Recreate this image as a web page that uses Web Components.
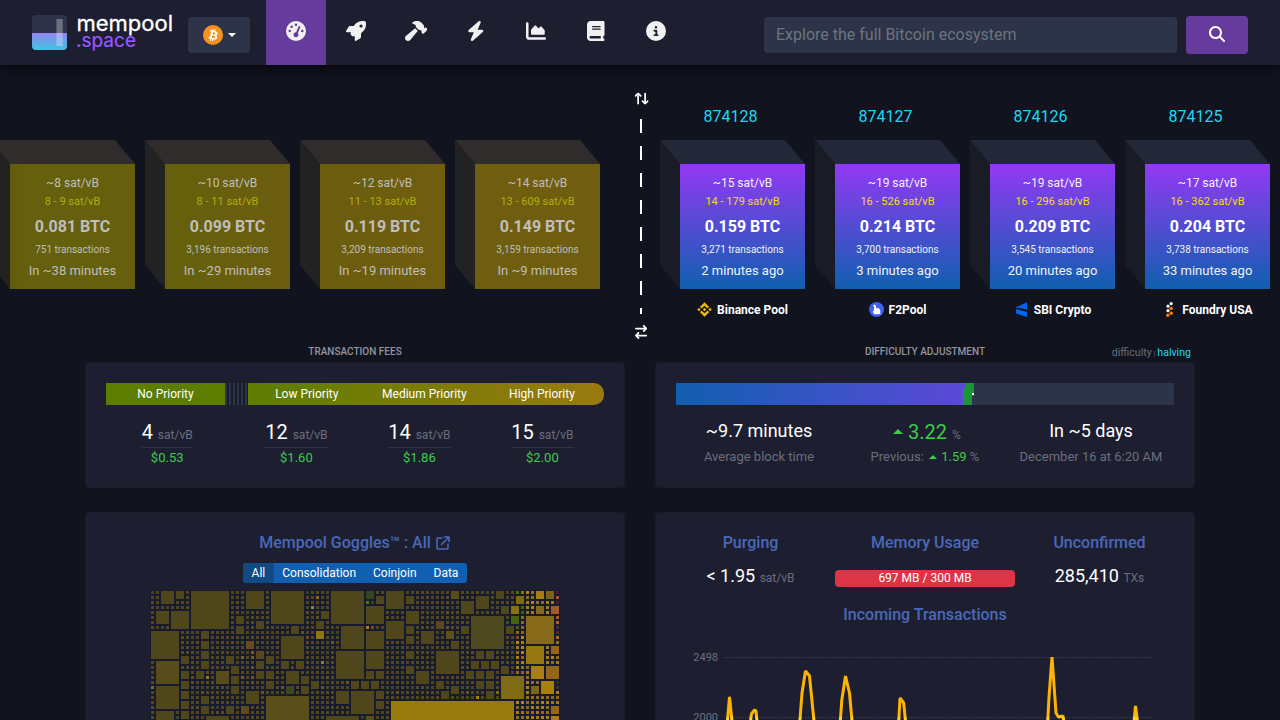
<!DOCTYPE html>
<html lang="en">
<head>
<meta charset="utf-8">
<title>mempool</title>
<style>
html,body{margin:0;height:100%;overflow:hidden;background:#11131f;color:#fff;font-family:Roboto,"Liberation Sans",sans-serif;font-size:16px}
</style>
</head>
<body>
<mempool-app></mempool-app>
<script>
const ICONS = {
  gauge:['0 0 512 512','M0 256a256 256 0 1 1 512 0A256 256 0 1 1 0 256zM288 96a32 32 0 1 0 -64 0 32 32 0 1 0 64 0zM256 416c35.3 0 64-28.7 64-64c0-17.4-6.9-33.1-18.1-44.6L366 161.7c5.3-12.1-.2-26.3-12.3-31.6s-26.3 .2-31.6 12.3L257.9 288c-.6 0-1.3 0-1.9 0c-35.3 0-64 28.7-64 64s28.7 64 64 64zM176 144a32 32 0 1 0 -64 0 32 32 0 1 0 64 0zM96 288a32 32 0 1 0 0-64 32 32 0 1 0 0 64zm352-32a32 32 0 1 0 -64 0 32 32 0 1 0 64 0z'],
  rocket:['0 0 512 512','M156.6 384.9L125.7 354c-8.5-8.5-11.5-20.8-7.7-32.2c3-8.9 7-20.5 11.8-33.8L24 288c-8.6 0-16.6-4.6-20.9-12.1s-4.2-16.7 .2-24.1l52.5-88.5c13-21.9 36.5-35.3 61.9-35.3l82.3 0c2.4-4 4.8-7.7 7.2-11.3C289.1-4.1 411.1-8.1 483.9 5.3c11.6 2.1 20.6 11.2 22.8 22.8c13.4 72.9 9.3 194.8-111.4 276.7c-3.5 2.4-7.3 4.8-11.3 7.2v82.3c0 25.4-13.4 49-35.3 61.9l-88.5 52.5c-7.4 4.4-16.6 4.5-24.1 .2s-12.1-12.2-12.1-20.9V380.8c-14.1 4.9-26.4 8.9-35.7 11.9c-11.2 3.6-23.4 .5-31.8-7.8zM384 168a40 40 0 1 0 0-80 40 40 0 1 0 0 80z'],
  hammer:['0 0 576 512','M413.5 237.5c-28.2 4.8-58.2-3.6-80-25.4l-38.1-38.1C280.4 159 272 138.8 272 117.6V105.5L192.3 62c-5.3-2.9-8.6-8.6-8.3-14.7s3.9-11.5 9.5-14l47.2-21C259.1 4.2 279 0 299.2 0h18.1c36.7 0 72 14 98.7 39.1l44.6 42c24.2 22.8 33.2 55.7 26.6 86L503 183l8-8c9.4-9.4 24.6-9.4 33.9 0l24 24c9.4 9.4 9.4 24.6 0 33.9l-88 88c-9.4 9.4-24.6 9.4-33.9 0l-24-24c-9.4-9.4-9.4-24.6 0-33.9l8-8-17.5-17.5zM27.4 377.1L260.9 182.6c3.5 4.9 7.5 9.6 11.8 14l38.1 38.1c6 6 12.4 11.2 19.2 15.7L134.9 484.6c-14.5 17.4-36 27.4-58.6 27.4C34.1 512 0 477.8 0 435.7c0-22.6 10.1-44.1 27.4-58.6z'],
  bolt:['0 0 448 512','M349.4 44.6c5.9-13.7 1.5-29.7-10.6-38.5s-28.6-8-39.9 1.8l-256 224c-10 8.8-13.6 22.9-8.9 35.3S50.7 288 64 288H175.5L98.6 467.4c-5.9 13.7-1.5 29.7 10.6 38.5s28.6 8 39.9-1.8l256-224c10-8.8 13.6-22.9 8.9-35.3s-16.6-20.7-30-20.7H272.5L349.4 44.6z'],
  chart:['0 0 512 512','M64 64c0-17.7-14.3-32-32-32S0 46.3 0 64V400c0 44.2 35.8 80 80 80H480c17.7 0 32-14.3 32-32s-14.3-32-32-32H80c-8.8 0-16-7.2-16-16V64zm96 288H448c17.7 0 32-14.3 32-32V251.8c0-7.6-2.7-15-7.7-20.8l-65.8-76.8c-12.1-14.2-33.7-15-46.9-1.8l-21 21c-10 10-26.4 9.2-35.4-1.6l-39.2-47c-12.6-15.1-35.7-15.4-48.7-.6L135.9 215c-5.1 5.8-7.9 13.3-7.9 21.1v84c0 17.7 14.3 32 32 32z'],
  book:['0 0 448 512','M96 0C43 0 0 43 0 96V416c0 53 43 96 96 96H384h32c17.7 0 32-14.3 32-32s-14.3-32-32-32V384c17.7 0 32-14.3 32-32V32c0-17.7-14.3-32-32-32H384 96zm0 384H352v64H96c-17.7 0-32-14.3-32-32s14.3-32 32-32zm32-240c0-8.8 7.2-16 16-16H336c8.8 0 16 7.2 16 16s-7.2 16-16 16H144c-8.8 0-16-7.2-16-16zm16 48H336c8.8 0 16 7.2 16 16s-7.2 16-16 16H144c-8.8 0-16-7.2-16-16s7.2-16 16-16z'],
  info:['0 0 512 512','M256 512A256 256 0 1 0 256 0a256 256 0 1 0 0 512zM216 336h24V272H216c-13.3 0-24-10.7-24-24s10.7-24 24-24h48c13.3 0 24 10.7 24 24v88h8c13.3 0 24 10.7 24 24s-10.7 24-24 24H216c-13.3 0-24-10.7-24-24s10.7-24 24-24zm40-208a32 32 0 1 1 0 64 32 32 0 1 1 0-64z'],
  search:['0 0 512 512','M416 208c0 45.9-14.9 88.3-40 122.7L502.6 457.4c12.5 12.5 12.5 32.8 0 45.3s-32.8 12.5-45.3 0L330.7 376c-34.4 25.2-76.8 40-122.7 40C93.1 416 0 322.9 0 208S93.1 0 208 0S416 93.1 416 208zM208 352a144 144 0 1 0 0-288 144 144 0 1 0 0 288z'],
  swap:['0 0 448 512','M438.6 150.6c12.5-12.5 12.5-32.8 0-45.3l-96-96c-12.5-12.5-32.8-12.5-45.3 0s-12.5 32.8 0 45.3L338.7 96 32 96C14.3 96 0 110.3 0 128s14.3 32 32 32l306.7 0-41.4 41.4c-12.5 12.5-12.5 32.8 0 45.3s32.8 12.5 45.3 0l96-96zm-333.3 352c12.5 12.5 32.8 12.5 45.3 0s12.5-32.8 0-45.3L109.3 416 416 416c17.7 0 32-14.3 32-32s-14.3-32-32-32l-306.7 0 41.4-41.4c12.5-12.5 12.5-32.8 0-45.3s-32.8-12.5-45.3 0l-96 96c-12.5 12.5-12.5 32.8 0 45.3l96 96z']
};
const define = (name, render) => customElements.define(name, class extends HTMLElement {
  connectedCallback() {
    if (this.shadowRoot) return;
    const t = document.createElement('template');
    t.innerHTML = typeof render === 'function' ? render(this) : render;
    this.attachShadow({mode:'open'}).append(t.content.cloneNode(true));
  }
});
const at = (el, n) => el.getAttribute(n) || '';

define('fa-icon', el => {
  const [vb, d] = ICONS[at(el,'name')];
  return `<style>:host{display:inline-flex;align-items:center;justify-content:center}svg{height:var(--size,20px);display:block;fill:currentColor}</style><svg viewBox="${vb}"><path fill-rule="evenodd" d="${d}"/></svg>`;
});

define('brand-logo', `<style>:host{display:block;width:145px;height:44px}svg{display:block}text{font-family:Inter,Lato,sans-serif}</style>
<svg width="145" height="44" viewBox="0 0 145 44"><defs><linearGradient id="g" x1="0" y1="0" x2="0" y2="1"><stop offset="0" stop-color="#9184f1"/><stop offset="1" stop-color="#3cc6e2"/></linearGradient></defs>
<path d="M0 22V8a4 4 0 0 1 4-4H31a4 4 0 0 1 4 4V22z" fill="#2e3349"/><path d="M0 22H35V35a4 4 0 0 1-4 4H4a4 4 0 0 1-4-4z" fill="url(#g)"/><rect x="24.4" y="8" width="6.3" height="27" fill="#fff" opacity=".3"/>
<text x="44.5" y="20.2" font-size="21.5" fill="#fff" stroke="#fff" stroke-width=".3" textLength="96.5" lengthAdjust="spacingAndGlyphs">mempool</text>
<text x="44" y="36" font-size="19.5" fill="#9857ff" stroke="#9857ff" stroke-width=".2" textLength="60" lengthAdjust="spacingAndGlyphs">.space</text></svg>`);

define('network-picker', `<style>:host{display:flex;align-items:center;justify-content:center;width:62px;height:36px;background:#2d3348;border-radius:4px;gap:5px;box-sizing:border-box;padding-left:1px}i{border:4.5px solid transparent;border-top-color:#fff;border-bottom:0;margin-top:-1px}</style>
<svg width="20" height="20" viewBox="0 0 32 32"><circle cx="16" cy="16" r="16" fill="#f7931a"/><path fill="#fff" fill-rule="evenodd" d="M23.189 14.02c.314-2.096-1.283-3.223-3.465-3.975l.708-2.84-1.728-.43-.69 2.765c-.454-.114-.92-.22-1.385-.326l.695-2.783L15.596 6l-.708 2.839c-.376-.086-.746-.17-1.104-.26l.002-.009-2.384-.595-.46 1.846s1.283.294 1.256.312c.7.175.826.638.805 1.006l-.806 3.235c.048.012.11.03.18.057l-.183-.045-1.13 4.532c-.086.212-.303.531-.793.41.018.025-1.256-.313-1.256-.313l-.858 1.978 2.25.561c.418.105.828.215 1.231.318l-.715 2.872 1.727.43.708-2.84c.472.127.93.245 1.378.357l-.706 2.828 1.728.43.715-2.866c2.948.558 5.164.333 6.097-2.333.752-2.146-.037-3.385-1.588-4.192 1.13-.26 1.98-1.003 2.207-2.538zm-3.95 5.538c-.533 2.147-4.148.986-5.32.695l.95-3.805c1.172.293 4.929.872 4.37 3.11zm.535-5.569c-.487 1.953-3.495.96-4.47.717l.86-3.45c.975.243 4.118.696 3.61 2.733z"/></svg><i></i>`);

define('nav-tab', el => `<style>:host{display:flex;width:60px;height:65px;justify-content:center;align-items:flex-start;padding-top:20.6px;box-sizing:border-box;color:#f1f1f1}:host([active]){background:#653b9c}</style><fa-icon name="${at(el,'icon')}"></fa-icon>`);

define('app-header', `<style>:host{display:flex;height:65px;background:#1d1f31;box-shadow:0 0 15px #000;position:relative;z-index:2;box-sizing:border-box;padding:0 32px}
brand-logo{margin-top:11px}network-picker{margin:17px 16px 0 11px}nav{display:flex}
.q{margin:17px 9px 0 auto;width:413px;height:36px;background:#2d3348;border-radius:4px;box-sizing:border-box;padding:0 12px;line-height:35px;color:#6c757d}
.b{margin-top:16px;width:62px;height:38px;background:#653b9c;border-radius:4px;display:flex;align-items:center;justify-content:center;--size:16px;padding-bottom:2px;box-sizing:border-box}</style>
<brand-logo></brand-logo><network-picker></network-picker>
<nav><nav-tab icon="gauge" active></nav-tab><nav-tab icon="rocket"></nav-tab><nav-tab icon="hammer"></nav-tab><nav-tab icon="bolt"></nav-tab><nav-tab icon="chart"></nav-tab><nav-tab icon="book"></nav-tab><nav-tab icon="info"></nav-tab></nav>
<div class="q">Explore the full Bitcoin ecosystem</div><div class="b"><fa-icon name="search"></fa-icon></div>`);

define('block-cube', el => { const [fee,range,amt,tx,time] = at(el,'data').split('|'); return `<style>
:host{display:grid;grid-template:24px 125px/20px 125px;width:145px;flex:none;--top:#232838;--side:#191c27;--face:linear-gradient(#9339f4,#105fb0);--y:#f5dc1e}
:host([pending]){--top:#302c2c;--side:#232222;--y:#b3ad0c}
.t{grid-area:1/1/2/3;background:var(--top);clip-path:polygon(0 0,125px 0,100% 100%,20px 100%)}
.s{grid-area:1/1/3/2;background:var(--side);clip-path:polygon(0 0,100% 24px,100% 100%,0 125px)}
.f{grid-area:2/2;background:var(--face);display:flex;flex-direction:column;align-items:center;padding-top:10px;box-sizing:border-box;white-space:nowrap}
:host([pending]) .f{color:#bfbebc}
.a{font-size:12px;line-height:18px}.r{font-size:11px;line-height:20px;color:var(--y)}.v{font-size:16px;font-weight:700;line-height:30px}.n{font-size:10px;line-height:15px}.m{font-size:13px;line-height:27px}
.a,.n,.m{opacity:.93}
:host([pending]) :is(.a,.n,.m){opacity:1}
</style><div class="s"></div><div class="t"></div><div class="f"><div class="a">${fee} sat/vB</div><div class="r">${range} sat/vB</div><div class="v">${amt} BTC</div><div class="n">${tx} transactions</div><div class="m">${time}</div></div>`; });

const POOLS = {
  'Binance Pool':'<g fill="#f0b90b" transform="translate(-.7 -.7) scale(.137)"><path d="M38.7 53.2 60 32l21.3 21.3 12.4-12.4L60 7.2 26.3 40.8zM7.2 60l12.4-12.4L32 60 19.6 72.4zM38.7 66.8 60 88l21.3-21.3 12.4 12.4L60 112.8 26.3 79.2zM88 60l12.4-12.4L112.800 60l-12.400 12.400zM72.600 60 60 47.400 47.400 60 60 72.600z"/></g>',
  'F2Pool':'<circle cx="7.5" cy="7.500" r="7.500" fill="#3e60f5"/><path fill="#fff" d="M4.200 3.200 5.600 2.600 7 4 7.200 6 8.400 6.600 9.200 5.800 10.400 7 11.400 8.600 11 10.600 12 11.600 9.500 12.300H5.200L4.400 11 3.700 9.800 4.900 8.200 5.200 5.600z"/>',
  'SBI Crypto':'<path fill="#0063f7" d="M13 .2V7.400L4.800 5.700 2 6.100V5.300zM2 6.900 13 10V15L2 11.400z"/>',
  'Foundry USA':'<g fill="#fff"><circle cx="9.200" cy="1.600" r="1.600"/><circle cx="6" cy="4.200" r="1.600"/><circle cx="6" cy="8.700" r="1.600"/></g><g fill="#ff7a0d"><circle cx="9.200" cy="6.400" r="1.700"/><circle cx="9.200" cy="11.200" r="1.700"/><circle cx="5.800" cy="13.300" r="1.700"/></g>'
};
define('mined-block', el => `<style>:host{display:block;width:145px}.h{margin:0 12px 0 8px;height:49px;line-height:52px;color:#1bd8f4;text-align:center}
.p{margin-left:20px;width:125px;height:15px;margin-top:13px;display:flex;align-items:center;justify-content:center;gap:5px;font-size:12px;font-weight:700;white-space:nowrap}.p span{line-height:15px;padding-top:1px}svg{flex:none}</style>
<div class="h">${at(el,'height')}</div><block-cube data="${at(el,'data')}"></block-cube><div class="p"><svg width="15" height="15">${POOLS[at(el,'pool')]}</svg><span>${at(el,'pool')}</span></div>`);

define('chain-divider', `<style>:host{display:flex;flex-direction:column;align-items:center;width:60px;box-sizing:border-box;padding:27px 0 0 22px;--size:14px}
:host>*{flex:none}.u{transform:rotate(-90deg);height:13px}.l{width:2px;height:195px;margin:14px 0 11px;background:repeating-linear-gradient(#fff 0 14px,transparent 14px 27px)}.d{height:13px}</style>
<fa-icon class="u" name="swap"></fa-icon><div class="l"></div><fa-icon class="d" name="swap"></fa-icon>`);

define('block-strip', `<style>:host{display:flex;height:275px;overflow:hidden;position:relative}
.m{width:600px;display:flex;gap:10px;justify-content:flex-end;padding-top:75px;box-sizing:border-box;flex:none}
chain-divider{flex:none}.c{display:flex;gap:10px;padding-top:26px;box-sizing:border-box;flex:none}</style>
<div class="m">
<block-cube pending style="--face:linear-gradient(90deg,#605c0c,#65600d 15%,#66600d)" data="~8|8 - 9|0.081|751|In ~38 minutes"></block-cube>
<block-cube pending style="--face:linear-gradient(90deg,#66600d 30%,#6b5d0f 80%)" data="~10|8 - 11|0.099|3,196|In ~29 minutes"></block-cube>
<block-cube pending style="--face:linear-gradient(90deg,#6b5d0e,#705d10)" data="~12|11 - 13|0.119|3,209|In ~19 minutes"></block-cube>
<block-cube pending style="--face:#705e10" data="~14|13 - 609|0.149|3,159|In ~9 minutes"></block-cube></div>
<chain-divider></chain-divider>
<div class="c">
<mined-block height="874128" pool="Binance Pool" data="~15|14 - 179|0.159|3,271|2 minutes ago"></mined-block>
<mined-block height="874127" pool="F2Pool" data="~19|16 - 526|0.214|3,700|3 minutes ago"></mined-block>
<mined-block height="874126" pool="SBI Crypto" data="~19|16 - 296|0.209|3,545|20 minutes ago"></mined-block>
<mined-block height="874125" pool="Foundry USA" data="~17|16 - 362|0.204|3,738|33 minutes ago"></mined-block></div>`);

define('info-card', `<style>:host{display:block;background:#1d1f31;border:1px solid #181b2a;border-radius:4px;box-sizing:border-box;padding:20px}</style><slot></slot>`);

define('fee-value', el => `<style>:host{display:flex;flex-direction:column;align-items:center;white-space:nowrap}.v{font-size:20px;line-height:30px;border-bottom:1px solid #2d3348;height:30px}.v small{font-size:12px;color:#6b6d7c}.p{font-size:13px;color:#3bcc49;line-height:20px}</style>
<div class="v">${at(el,'fee')} <small>sat/vB</small></div><div class="p">${at(el,'price')}</div>`);

define('fee-box', `<style>:host{display:block}.b{display:flex;height:22px;font-size:12px;line-height:22px;text-align:center}
.n{width:119px;background:#5d7d01}.s{width:23px;background:repeating-linear-gradient(90deg,#2d3348 0 2px,#1a1c2c 2px 4px)}
.g{flex:1;display:flex;background:linear-gradient(90deg,#5d7d01,#9a7a0f);border-radius:0 10px 10px 0}.g div{width:117.6px}
.v{display:grid;grid-template-columns:122.4px 136px 110px 136px;margin-top:12px}</style>
<div class="b"><div class="n">No Priority</div><div class="s"></div><div class="g"><div>Low Priority</div><div>Medium Priority</div><div>High Priority</div></div></div>
<div class="v"><fee-value fee="4" price="$0.53"></fee-value><fee-value fee="12" price="$1.60"></fee-value><fee-value fee="14" price="$1.86"></fee-value><fee-value fee="15" price="$2.00"></fee-value></div>`);

define('difficulty-box', `<style>:host{display:block}.bar{height:22px;display:block}.r{display:flex;text-align:center;margin-top:13px}.r>div{width:166px;white-space:nowrap}
.a{font-size:18px;line-height:26px}.k{font-size:13px;color:#6b6d7c;line-height:26px}.g{color:#3bcc49}.p{font-size:20px;line-height:28px;height:26px;padding-left:4px}small{font-size:12px;color:#6b6d7c}
i{display:inline-block;border:5px solid transparent;border-bottom:5px solid #3bcc49;border-top:0;vertical-align:5px}.k i{border-width:0 4px 4px;vertical-align:2px;margin:0 1.5px}</style>
<svg class="bar" width="498" height="22"><defs><linearGradient id="d" gradientUnits="userSpaceOnUse" x1="0" x2="498"><stop stop-color="#105fb0"/><stop offset="1" stop-color="#9339f4"/></linearGradient></defs><path fill="#2d3348" d="M0 0H498V22H0z"/><path fill="url(#d)" d="M0 0H289V22H0z"/><path fill="#1c9536" d="M289 0H298V13H296V22H287V5H289z"/><path fill="#fff" d="M296 10h2v2h-2z"/></svg>
<div class="r"><div><div class="a">~9.7 minutes</div><div class="k">Average block time</div></div>
<div><div class="p g"><i></i> 3.22 <small>%</small></div><div class="k">Previous: <i></i> <span class="g">1.59</span> %</div></div>
<div><div class="a">In ~5 days</div><div class="k">December 16 at 6:20 AM</div></div></div>`);

/* Treemap cells: column, row, size in 5px units, optional colour. */
const TILES = `2 0 3,5 0 2,8 0 8,19 0 4,24 0 7,36 0 7,1 4 3,4 4 4,17 5 2,17 7 2,21 6 2,34 4 2,33 6 2,33 8 2 #917710,32 3 1 #a0820e,38 7 5,0 8 6,10 8 2,10 10 2,10 12 2,10 14 2,28 7 2,26 9 5,19 10 2 #664b1c,21 12 2 #5a461d,21 14 2,21 16 2,23 13 2,23 16 2,23 18 2,6 13 2,6 16 2,6 18 2,6 20 2,6 22 2,6 24 2,1 14 5 #574c1b,1 19 5,1 24 4,15 13 2,16 15 2,16 17 2,16 19 2,9 16 2,13 16 3 #574c1b,11 17 1 #917710,26 14 2,29 14 2,27 16 3,30 17 2,30 19 2,27 19 2 #3f471f,32 18 2,37 12 6,19 20 3,10 21 2,10 23 2,15 23 2,18 23 2 #62491c,23 21 9 #5a4e1b,11 25 5,35 25 7,37 20 3,40 18 2,42 18 2,44 18 2,40 20 5,43 0 2 #33471c,45 1 2,43 3 4,47 0 4,51 1 2,51 4 3,47 6 4,43 8 4,43 12 4,51 7 2,51 9 2,54 8 3,57 6 2 #5e461e,59 8 2 #5f4e1a,60 10 2,60 0 2 #5a4c1a,62 2 3,65 1 3,69 0 2,70 3 2,72 3 2 #86700f,73 1 2 #7f6814,72 5 2 #45620f,71 7 2,64 5 7 #4d481d,62 7 2,77 0 2 #a97c10,79 0 2 #7f6215,77 3 2 #85691a,80 3 2 #a25a29,75 5 6 #87691a,75 11 4 #967513,80 11 2 #976518,76 15 3 #a97f0e,79 15 3 #936618,78 18 3 #a97f0e,76 19 2 #7b6814,70 17 5 #806b15,48 22 25 #977c0d,80 23 2 #976518,80 25 2 #ad7a12,51 12 2,51 15 2,53 16 3,57 12 5,57 18 2,58 20 2,60 19 2,65 12 2,67 12 2,64 14 2,66 14 2,68 14 2,63 16 2,65 16 2,67 16 2,65 18 2,67 18 2,67 20 2,70 15 2,43 16 2,45 16 2,45 20 2,45 22 2,43 25 2 #574c1b,65 21 1 #a58210,43 2 1 #4f7d04,44 2 1 #2e4a22,43 7 1 #b27a12,44 7 1 #774f20,31 0 1 #28481c,31 1 1 #5f4020,33 1 1 #8b6b14,22 11 1 #2e481e,18 13 1 #776017,20 12 1 #7a581b,20 13 1 #7a581b,20 15 1 #6d501c,18 17 1 #6f5a18,20 17 1 #7a501c,34 14 1 #a0820e,0 19 1 #7e6a14,26 19 1 #785019,61 9 1 #2e501e,71 9 1 #65431f,72 13 1 #2e501e,69 20 1 #786812,73 0 1 #4b7407,74 3 1 #3f6a0b,74 4 1 #3a5d10,71 6 1 #365020,73 7 1 #45620f,81 0 1 #471d33,81 1 1 #b34c34,81 2 1 #42202f,81 5 1 #a35a28,81 6 1 #b35d22,81 7 1 #492b2c,81 8 1 #492b2c,81 9 1 #a5671b,81 18 1 #25321f,81 19 1 #482a2b,42 25 1 #2e4a1e,73 8 1 #956516,67 8 1,36 10 1 #6d5618,39 18 1 #70501c,22 20 1 #70501c,73 9 1 #784d20`;
define('block-treemap', () => {
  const W = 82, H = 27, used = new Set(); let out = '', seed = 7;
  const rnd = () => (seed = (seed * 16807) % 2147483647) / 2147483647;
  for (const t of TILES.split(',')) {
    const [c, r, n, col] = t.trim().split(' '), s = +n;
    if (s === 1 && used.has(c + '_' + r)) continue;
    for (let i = 0; i < s; i++) for (let j = 0; j < s; j++) used.add((+c + i) + '_' + (+r + j));
    out += `<path fill="${col || '#50461c'}" d="M${c*5+1} ${r*5+1}h${s*5-2}v${s*5-2}h-${s*5-2}z"/>`;
  }
  const dim = ['#50461d','#4e451d','#524820','#50461d','#54491c','#4e451d'], gold = ['#a67e10','#8f7013','#a9770f','#8a6a16','#b08310'];
  for (let r = 0; r < H; r++) for (let c = 0; c < W; c++) {
    if (used.has(c + '_' + r)) continue;
    const bright = c >= 75 || (c >= 73 && (r < 1 || r > 7)) || c === 74;
    const k = rnd();
    const f = bright ? gold[k * 5 | 0] : k > .98 ? '#62501a' : k < .008 ? '#3a461e' : dim[k * 6 | 0];
    out += `<path fill="${f}" d="M${c*5+1} ${r*5+1}h3v3h-3z"/>`;
  }
  return `<style>:host{display:block;width:410px;height:135px;background:#181b2d}svg{display:block}</style><svg width="410" height="135">${out}</svg>`;
});

define('goggles-box', `<style>:host{display:flex;flex-direction:column;align-items:center}h5{margin:0;font-size:16px;font-weight:500;line-height:20px;color:#4a68b9;display:flex;gap:5px;align-items:center;padding-right:1px}
.t{display:flex;margin:10px 0 7px;height:20px;border-radius:3px;overflow:hidden;font-size:12px;line-height:20px;background:#105fb0}.t span{padding:0 8.5px}.t .on{background:#124a83}</style>
<h5>Mempool Goggles™ : All <svg width="14" height="14" viewBox="0 0 14 14" fill="none" stroke="#4a68b9" stroke-width="1.6" stroke-linecap="round" stroke-linejoin="round"><path d="M6 2H2.2A1.2 1.2 0 0 0 1 3.200V11.800A1.2 1.200 0 0 0 2.200 13H10.800A1.200 1.200 0 0 0 12 11.800V8M8.500 1H13V5.500M13 1 5.500 8.500"/></svg></h5>
<div class="t"><span class="on">All</span><span>Consolidation</span><span>Coinjoin</span><span>Data</span></div><block-treemap></block-treemap>`);

define('tx-chart', `<style>:host{display:block;height:80px}svg{display:block}text{font-size:11px;fill:#6e7079;font-family:Roboto,sans-serif}</style>
<svg width="498" height="80" viewBox="676 643 498 80"><text x="718" y="661" text-anchor="end">2498</text><text x="718" y="721" text-anchor="end">2000</text>
<path d="M724 657.500H1154M724 717.500H1154" stroke="#3d3f50" stroke-dasharray="1.500 1.500"/>
<defs><linearGradient id="y" gradientUnits="userSpaceOnUse" x1="0" x2="0" y1="715" y2="719"><stop stop-color="#fdb300"/><stop offset="1" stop-color="#fdd835"/></linearGradient></defs>
<g fill="none" stroke="url(#y)" stroke-width="3" stroke-linejoin="bevel"><path d="M727 726 729.500 697 732.500 726M750 726 751.400 714 754.500 710 756 711 757.500 726M799.500 726 802 693 805.500 671 809.500 676 814.500 726M840 726 841.800 700 845.500 676 849.500 693 852.500 726M898.500 726 900 698 903.700 703 906 726M1047.500 726 1049 697 1052 657 1056 713 1058.500 717 1063 716 1064.500 726M1133.600 726 1135.500 706 1138 726M1140 726 1143 721"/></g></svg>`);

define('memory-box', `<style>:host{display:block}.r{display:flex;text-align:center}.r>div{white-space:nowrap}h5{margin:0;font-size:16px;font-weight:500;line-height:20px;color:#4a68b9;text-align:center}
.v{font-size:18px;line-height:28px;margin-top:9px}small{font-size:12px;color:#6b6d7c}.p{margin-top:17px;height:17px;background:#dc3545;border-radius:4px;font-size:12px;line-height:17px}.i{margin:13px 0 18px}.x{width:149px}.y{width:180px;margin:0 10px}</style>
<div class="r"><div class="x"><h5>Purging</h5><div class="v">&lt; 1.95 <small>sat/vB</small></div></div><div class="y"><h5>Memory Usage</h5><div class="p">697 MB / 300 MB</div></div><div class="x"><h5>Unconfirmed</h5><div class="v">285,410 <small>TXs</small></div></div></div>
<h5 class="i">Incoming Transactions</h5><tx-chart></tx-chart>`);

define('mempool-app', `<style>:host{display:block;height:720px;overflow:hidden}
main{display:grid;grid-template-columns:540px 540px;column-gap:30px;justify-content:center}
.t{height:22px;font-size:10px;line-height:24px;text-align:center;color:#94959d;font-weight:500;display:grid;grid-template-columns:1fr auto 1fr}
.t span{grid-column:3;text-align:right;font-size:10.6px;line-height:25px;color:#6b6d7c;font-weight:400;padding-right:4px;word-spacing:-.7px}.t b{color:#1bd8f4;font-weight:400}.t i{font-style:normal;font-size:7px}.t em{grid-column:2;font-style:normal}
.a{height:126px;margin-bottom:24px}.b{height:260px}</style>
<app-header></app-header><block-strip></block-strip>
<main><div class="t"><em>TRANSACTION FEES</em></div><div class="t"><em>DIFFICULTY ADJUSTMENT</em><span>difficulty <i>|</i> <b>halving</b></span></div>
<info-card class="a"><fee-box></fee-box></info-card><info-card class="a"><difficulty-box></difficulty-box></info-card>
<info-card class="b"><goggles-box></goggles-box></info-card><info-card class="b"><memory-box></memory-box></info-card></main>`);
</script>
</body>
</html>
